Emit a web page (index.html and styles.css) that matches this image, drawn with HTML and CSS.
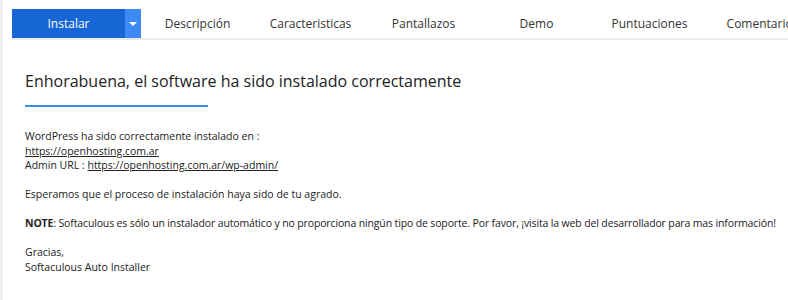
FILE: index.html
```html
<!DOCTYPE html>
<html>
<head>
    <title>Instalar</title>
    <meta charset="utf-8">
    <link rel="stylesheet" href="styles.css">
</head>
<body>
    <div class="wrap">
        <div class="tabs">
            <div class="tab-install">
                <span class="install-label">Instalar</span>
                <span class="install-drop"><span class="caret"></span></span>
            </div>
            <div class="tab">Descripción</div>
            <div class="tab">Caracteristicas</div>
            <div class="tab">Pantallazos</div>
            <div class="tab">Demo</div>
            <div class="tab">Puntuaciones</div>
            <div class="tab">Comentarios</div>
        </div>
        <div class="content">
            <h2 class="title">Enhorabuena, el software ha sido instalado correctamente</h2>
            <div class="rule"></div>
            <div class="message">
                WordPress ha sido correctamente instalado en :<br>
                <a href="#">https://openhosting.com.ar</a><br>
                Admin URL : <a href="#">https://openhosting.com.ar/wp-admin/</a><br>
                <br>
                Esperamos que el proceso de instalación haya sido de tu agrado.<br>
                <br>
                <span class="note"><b>NOTE</b>: Softaculous es sólo un instalador automático y no proporciona ningún tipo de soporte. Por favor, ¡visita la web del desarrollador para mas información!</span><br>
                <br>
                Gracias,<br>
                Softaculous Auto Installer
            </div>
        </div>
    </div>
</body>
</html>
```

FILE: styles.css
```css
body {
    margin: 0;
    background-color: #fff;
    font-family: "Open Sans", sans-serif;
    color: #222;
    overflow: hidden;
}
.wrap {
    border-left: 3px solid #eef0f3;
    min-height: 300px;
    padding-top: 9px;
}
.tabs {
    display: flex;
    margin-left: 9px;
    border-bottom: 2px solid #ebebeb;
    white-space: nowrap;
}
.tab-install {
    display: flex;
    flex: none;
}
.install-label {
    width: 113px;
    height: 29px;
    line-height: 29px;
    text-align: center;
    background-color: #1766d6;
    color: #fff;
    font-size: 12px;
}
.install-drop {
    width: 16px;
    height: 29px;
    background-color: #3d8af5;
    display: flex;
    align-items: center;
    justify-content: center;
}
.caret {
    width: 0;
    height: 0;
    border-left: 4px solid transparent;
    border-right: 4px solid transparent;
    border-top: 4px solid #fff;
}
.tab {
    flex: none;
    width: 113px;
    height: 29px;
    line-height: 29px;
    text-align: center;
    font-size: 12px;
    color: #333;
}
.content {
    padding: 0 0 0 22px;
}
.title {
    margin: 0;
    padding-top: 30px;
    font-size: 16px;
    font-weight: normal;
    line-height: 22px;
    color: #222;
}
.rule {
    width: 183px;
    height: 2px;
    background-color: #3b8ce3;
    margin-top: 13px;
}
.message {
    margin-top: 22px;
    font-size: 10.5px;
    line-height: 14.5px;
    white-space: nowrap;
}
.message a {
    color: #222;
}
.message b {
    font-weight: bold;
}
.note {
    letter-spacing: -0.14px;
}
```
